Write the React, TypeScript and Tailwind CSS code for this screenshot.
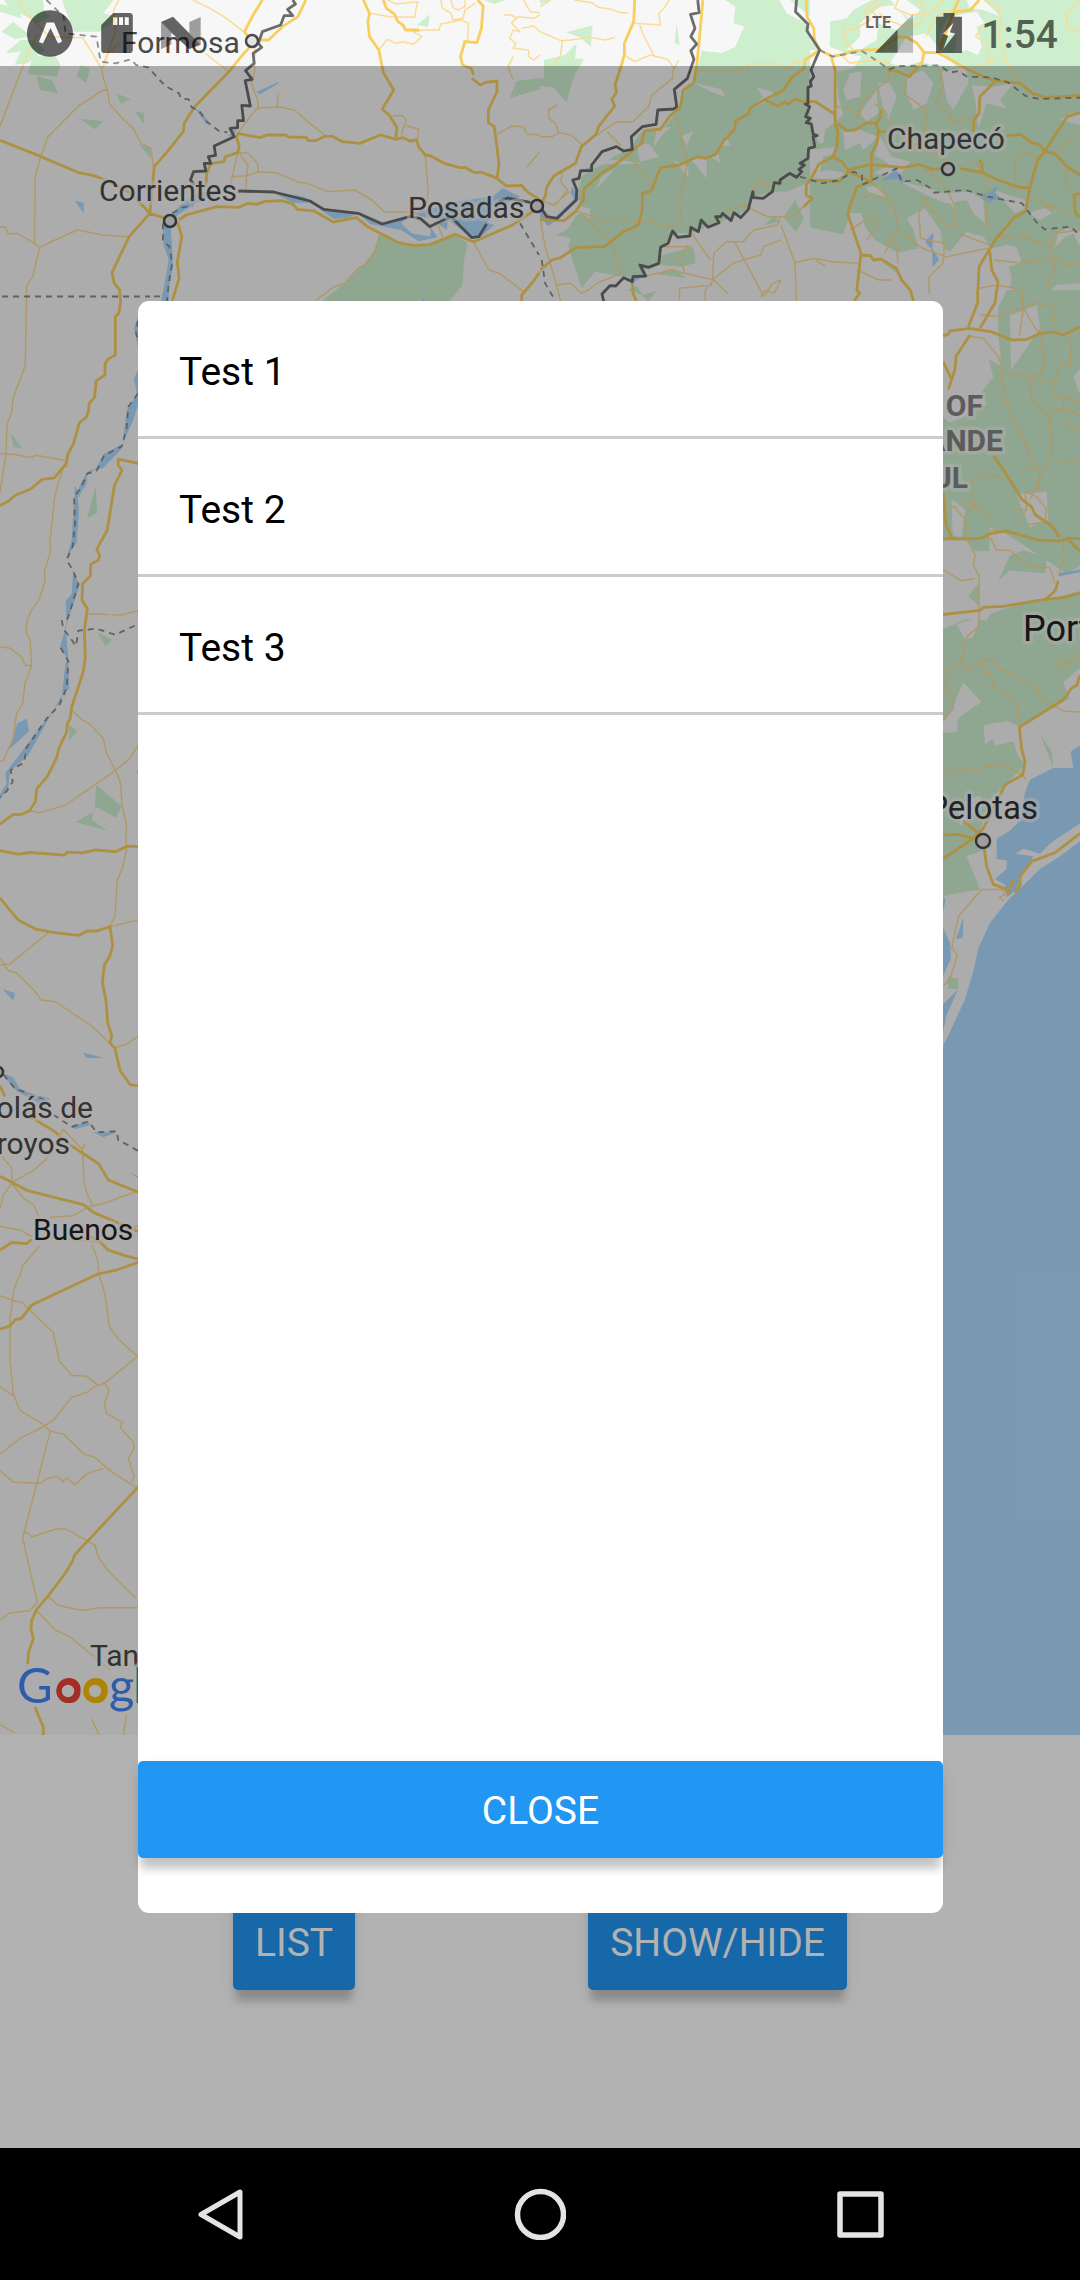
import React from "react";

type Tile = {
  id: string;
  x: number;
  y: number;
  width: number;
  height: number;
  box: string;
  transparent?: boolean;
  parks?: string[];
  clearings?: string[];
  water?: string[];
  minor?: string;
  major?: string;
  border?: string;
  dashed?: string;
};

const northWest: Tile = {
  id: "north-west",
  x: 0,
  y: 0,
  width: 540,
  height: 301,
  box: "0 0 1568 903",
  parks: [
    "12,0 125,0 128,30 145,50 110,70 60,40 35,38",
    "180,0 330,0 300,40 345,50 290,95 215,95 190,30",
    "0,12 62,28 60,55 0,35",
    "38,65 5,95 45,118 90,108",
    "60,120 15,160 60,155 42,195 80,190 130,150 100,120",
    "95,170 160,165 175,195 165,230 80,222",
    "105,228 150,240 170,280 117,270",
    "235,195 262,205 250,248 222,228",
    "338,280 380,298 350,312",
    "390,332 418,340 417,373",
    "233,356 300,364 276,388",
    "403,432 438,445 436,473",
    "1210,75 1248,43 1243,80",
    "1405,0 1470,0 1435,12",
    "1500,243 1568,234 1568,268 1480,294",
    "1102,705 1165,730 1210,738 1255,730 1322,705 1357,728 1348,780 1342,857 1305,903 935,903 1000,850 1050,800 1085,755",
  ],
  water: [
    "745,275 808,246 812,248 755,283",
    "565,325 585,335 608,368 600,372 580,345",
    "217,602 243,608 243,640",
    "662,408 685,388 680,410",
    "492,650 530,610 580,575 640,578 570,610 515,645 495,680 500,740 502,800 490,870 490,903 468,903 480,840 490,780 475,735 473,680",
    "790,575 885,590 905,608 850,608",
    "900,605 940,625 1040,638 1015,652 970,658",
    "1040,640 1110,668 1190,645 1165,670 1195,700 1250,710 1250,680 1270,712 1215,724 1165,690 1075,672",
    "1270,670 1300,665 1298,690",
    "1190,640 1350,600 1430,590 1460,565 1510,590 1480,605 1440,625 1415,668 1435,675 1395,712 1370,715 1310,665 1230,650",
    "1226,890 1236,903 1226,903",
  ],
  minor:
    "M60,0 65,30 100,65 145,110 240,113 280,180 295,205 300,235 312,270 318,312 360,360 385,383 410,430 438,445 445,500 M110,100 75,175 40,270 0,380 M345,0 330,30 335,100 300,190 M345,130 315,160 298,205 M312,270 300,270 228,318 138,412 118,470 102,530 100,730 115,742 95,830 77,857 77,903 M0,682 15,680 25,703 50,700 100,730 M115,742 160,720 225,690 300,705 375,710 M560,0 610,25 650,50 712,98 M560,130 620,180 665,215 M740,130 740,210 730,250 748,300 750,325 M745,325 810,320 855,330 900,370 945,407 M748,325 730,345 690,400 M808,280 805,320 M695,458 720,460 748,490 750,515 800,518 870,548 888,548 950,575 1030,570 1080,600 1115,635 1210,637 M695,460 720,495 713,570 M750,515 715,527 670,530 M690,460 670,550 M1235,465 1243,570 1240,620 M1140,347 1170,347 1180,360 1165,405 M1180,377 1215,387 1213,420 M1375,726 1420,810 1450,820 1520,875 M1443,403 1485,378 1520,380 1530,402 1568,405 M1568,455 1530,500 M1075,40 1130,50 1203,52 1213,5 1150,12 1125,0 M1100,150 1125,118 1150,130 1170,125 1200,133 1225,110 1200,95 1230,90 1275,90 1280,72 1340,60 1360,70 1358,120 1345,125 M1280,0 1285,25 1310,40 1315,60 1345,55 1350,30 1380,10 M1310,0 1315,22 1330,30 1350,20 1350,0 M1463,45 1485,45 1500,55 1485,68 1510,95 1490,90 1480,115 1498,130 1490,145 1535,150 1535,170 1550,180 1568,165 M1520,0 1540,35 1568,38 M1500,50 1550,55 1568,45 M1515,85 1550,78 1568,95 M1490,240 1475,200 1490,170 M1270,670 1285,710 M1102,705 1090,750 1062,795 1045,800 1000,850 970,860 915,903",
  major:
    "M0,421 120,470 225,517 270,526 320,545 380,580 435,640 480,655 M762,0 735,45 710,95 735,130 700,170 665,215 565,320 535,370 533,393 490,450 448,500 435,640 375,710 325,818 332,850 350,873 350,903 M888,0 865,50 820,80 780,120 755,120 M1055,0 1073,40 1068,65 1073,110 1100,150 1113,217 1143,270 1110,328 1130,345 1153,383 1148,417 M690,400 755,413 775,405 830,405 837,411 890,412 895,422 915,422 945,409 965,409 995,425 1045,430 1105,405 1150,418 1170,413 1190,423 1210,420 1215,440 1235,465 1250,467 1290,490 1335,503 1350,502 1375,517 1398,517 1440,533 1470,558 1515,556 1530,575 1568,600 M690,400 687,413 695,440 690,458 655,470 650,485 612,491 600,520 598,560 M520,660 540,645 630,620 695,622 720,610 745,613 770,604 820,602 850,612 863,628 912,633 968,666 1035,653 1070,682 1155,727 1198,736 1248,734 1322,703 1375,726 1420,706 1490,674 1568,620 M515,665 528,710 515,785 520,835 500,903 M1113,0 1122,25 1145,42 1155,65 1170,75 1178,90 1217,90 M1387,0 1403,18 1398,85 1385,128 1350,125 1337,170 1343,195 1368,205 1375,225 M1370,235 1395,255 1410,247 1443,243 1443,275 1418,330 1418,368 1435,380 1443,440 1449,495 1443,535 M1568,815 1548,845 1515,885 1515,903",
  border:
    "M850,0 858,12 835,28 850,47 825,47 815,75 762,95 750,130 760,142 735,160 738,190 713,212 732,238 712,242 727,318 702,316 707,362 690,362 690,383 668,385 680,410 622,438 626,466 605,470 612,490 593,490 598,513 562,515 553,540 565,555 M690,573 795,576 900,603 940,628 1040,640 1110,672 1190,650 1220,655 1248,680 1270,668 1310,650 1370,713 1390,710 1413,672 M1450,603 1475,594 1540,607",
  dashed:
    "M135,0 185,50 190,100 205,102 280,110 292,185 335,190 380,178 395,195 430,202 480,258 520,280 525,295 548,298 555,320 580,335 600,365 635,392 660,397 M0,889 470,889 M500,640 530,622 560,618 M473,670 473,720 492,740 500,790 490,850 485,903 M1510,670 1565,765",
};

const northLand: Tile = {
  id: "north-land",
  x: 540,
  y: 0,
  width: 270,
  height: 301,
  box: "0 0 810 903",
  parks: [
    "12,180 75,165 110,130 105,175 132,178 108,215 95,250 80,306 65,290 40,262 0,258 0,235 12,235",
    "78,97 158,76 152,140 120,112",
    "410,70 419,137 404,128",
    "0,12 35,0 0,0",
    "485,30 510,0 555,0 585,20 580,70 612,80 585,140 545,158 485,152 470,215 455,250 425,290 410,335 375,380 300,400 275,440 220,470 190,492 155,510 125,530 115,575 125,620 150,625 150,655 115,640 80,690 47,705 92,715 85,740 125,865 165,815 245,830 300,830 320,805 360,790 365,745 400,700 450,700 500,680 570,655 625,628 640,590 700,575 740,575 810,545 810,0 555,0",
    "350,770 460,740 468,790 420,800 365,795",
    "350,822 400,805 440,835",
    "262,870 290,858 308,885",
    "305,885 350,873 325,903",
    "675,675 700,645 720,665",
    "730,650 765,600 792,655 768,697",
  ],
  clearings: [
    "485,0 555,0 585,20 580,70 612,80 585,140 545,158 485,152 500,135 572,112 520,85 525,50 485,30",
    "460,248 545,268 555,290 520,278",
    "425,408 460,393 440,437",
    "340,445 350,385 395,380 365,405",
    "290,435 325,430 358,470 300,485",
    "165,570 185,530 225,505 195,540",
    "150,492 305,492 260,482 215,480",
    "400,480 445,500 445,530",
    "455,480 500,470 500,535",
    "512,470 535,460 542,490",
    "535,440 555,410 572,435",
    "648,262 695,275 705,290 620,335 670,290",
    "718,0 750,0 810,50 810,75 740,40",
  ],
  water: [
    "118,512 155,500 155,512 120,520",
    "95,560 112,580 122,598 105,605 58,655 25,678 0,655 0,620 20,648 45,652 102,598 92,580",
    "248,835 305,832 285,845",
  ],
};

const northEastLand: Tile = {
  id: "north-east-land",
  x: 810,
  y: 0,
  width: 270,
  height: 301,
  box: "0 0 810 903",
  parks: [
    "60,65 110,55 130,30 185,0 810,0 810,690 770,685 745,700 735,740 765,712 790,700 810,740 810,850 740,855 685,903 600,865 605,830 595,800 635,790 620,740 590,735 545,745 520,710 470,695 420,755 400,745 390,690 345,625 290,655 310,690 325,745 265,758 195,720 165,680 155,640 120,640 100,703 10,685 0,680 0,540 80,535 110,520 60,510 30,515 40,470 75,460 85,440 0,450 0,350 25,430 40,430 45,390 100,345 85,290 80,215 130,205 155,170 110,160 60,140",
    "0,0 0,150 25,150 0,120",
    "215,785 260,805 270,825",
    "0,550 12,610 0,620",
  ],
  clearings: [
    "150,70 210,20 260,15 290,60 260,90 205,70 200,120 150,150 110,150 150,110",
    "240,0 290,0 330,30 300,60",
    "290,110 350,100 400,160 440,200 370,195 330,185 280,200 240,190",
    "415,50 500,35 525,70 500,80 515,140 503,165 470,150 435,160 440,100 385,115 400,80",
    "470,0 520,0 570,48 520,30 480,25",
    "120,220 155,215 150,290 110,300 100,270",
    "150,340 200,270 205,340 170,365",
    "205,250 240,250 260,290 235,360 220,330",
    "290,230 340,210 370,250 350,310 310,330 290,280",
    "395,215 470,200 475,250 430,330 410,300",
    "485,255 550,260 610,250 570,300 590,325 530,310 505,385 495,300",
    "100,395 150,390 205,410 160,450 150,430 105,450",
    "210,410 245,470 300,485 265,530 190,520 240,495 195,465",
    "260,540 340,560 400,580 480,575 520,600 525,670 490,640 470,600 410,610 360,590 320,570",
    "550,570 645,600 645,625 615,640",
    "410,595 430,582 440,640",
    "750,360 780,340 810,335 810,375",
    "655,640 700,625 735,635 690,660",
    "165,560 210,560 225,590 180,580",
  ],
  water: [
    "217,540 255,508 278,530 280,555 262,538",
    "345,725 371,697 367,745 388,778 368,802 366,750",
    "508,582 535,578 562,558 556,585 595,605 560,598 532,610",
  ],
};

const northEastRoads: Tile = {
  id: "north-east-roads",
  x: 540,
  y: 0,
  width: 540,
  height: 301,
  box: "0 0 1568 903",
  transparent: true,
  minor:
    "M0,20 30,0 M100,0 150,8 170,22 205,28 235,38 255,38 M275,70 350,75 345,40 360,25 375,0 M290,75 300,105 330,165 M245,165 275,185 320,165 370,178 392,208 M0,95 60,122 90,120 145,112 190,120 218,112 M65,122 60,165 35,200 M403,180 385,215 385,235 325,285 315,320 270,365 M50,315 25,330 25,355 45,370 55,398 M0,410 35,410 55,398 90,405 120,432 M270,365 220,367 165,405 M195,395 235,437 M385,340 403,365 415,440 430,480 405,600 412,690 M65,520 60,545 80,570 45,615 M0,600 40,615 85,575 M110,635 190,662 270,665 285,670 320,660 360,682 400,675 M120,640 170,690 212,730 220,780 235,820 M455,212 545,215 570,205 600,212 605,192 680,190 710,205 765,180 M0,655 15,740 40,825 60,903 M45,855 90,850 120,880 140,870 165,850 230,822 M260,470 300,520 325,560 M360,740 440,740 M440,700 495,780 M430,735 405,770 420,815 M505,840 380,810 300,830 M405,903 405,865 500,855 M505,840 545,880 M540,725 505,760 500,845 480,870 480,903 M565,725 650,890 M540,725 590,725 620,690 690,675 700,645 M500,840 560,790 640,765 650,740 700,720 M700,675 740,788 745,903 M640,890 655,870 680,880 700,840 675,850 650,890 M740,788 795,775 850,785 920,790 M900,155 880,170 900,190 970,180 1015,190 1010,240 930,310 930,355 M860,320 900,325 925,355 M1085,200 1065,240 1055,280 1090,305 1125,335 1110,420 M1160,200 1170,260 1150,310 1195,345 1190,370 1270,350 M970,310 1000,330 1010,350 M1055,400 1070,430 1140,460 1175,475 1175,500 M1010,360 1050,380 1090,440 1150,465 M1120,510 1160,540 1180,570 M980,0 940,30 960,60 910,90 880,80 890,130 910,150 M1040,0 1030,25 1075,45 1135,40 1170,0 M980,50 960,30 1000,10 M1290,0 1330,20 1340,60 1330,100 1350,180 1395,240 M1290,70 1265,110 1300,130 1300,190 M1100,0 1120,30 1105,70 1060,80 M1060,80 1010,60 985,40 M1200,30 1150,50 1120,110 M1568,0 1530,40 1530,80 1568,100 M1325,180 1260,205 M1568,405 1530,425 1505,460 M1380,580 1380,470 1410,460 1450,470 M1285,520 1260,480 M1530,500 1525,550 1568,590 M1290,520 1300,560 1295,690 M1440,590 1490,640 1470,610 1540,640 M1185,575 1205,620 1205,680 1170,670 1110,590 M1105,715 1100,640 1125,590 M1105,715 1175,730 1170,790 1130,830 1130,880 1160,903 M1055,700 1110,745 1180,770 1300,745 M1215,700 1305,735 M1325,715 1390,705 1480,740 1495,810 1475,840 1475,903 M1480,740 1500,700 1568,690 M1490,770 1530,795 1568,790 M1320,780 1400,790 1480,775 M960,545 1000,580 1030,625 1040,690 1000,760 M930,600 960,580 1010,600 M920,810 985,840 1020,840 M800,780 830,800 M900,690 960,650 985,665 950,720 M1010,720 1035,740 1040,790 M1275,865 1330,855 1400,870 M620,590 625,550 645,540 655,560 700,555 M540,625 600,620 660,650 730,650 765,620",
  major:
    "M275,0 272,65 245,130 245,165 232,210 218,255 222,278 208,297 217,318 170,380 163,403 120,440 103,490 40,528 20,560 15,590 5,605 M473,0 457,180 447,247 415,272 408,322 380,345 350,387 303,393 295,430 215,497 180,518 128,567 125,600 103,635 70,662 0,658 M812,150 770,180 767,205 733,230 705,272 650,300 610,325 605,343 568,362 565,388 535,420 510,463 480,475 455,470 405,495 350,503 323,573 297,580 297,630 285,675 240,697 188,740 105,742 60,773 35,780 0,810 M655,300 690,318 712,305 720,314 738,297 765,305 800,305 855,342 M773,0 775,50 795,85 797,120 812,150 850,170 920,152 985,148 1040,110 1065,112 1095,130 1115,157 1155,158 1190,178 1240,208 1270,222 1315,240 1395,250 1430,280 1465,292 1568,287 M845,170 857,210 857,370 865,395 862,440 850,472 810,492 785,540 773,555 773,585 790,595 765,622 M865,370 890,392 915,390 950,368 975,370 983,390 978,430 962,460 962,545 895,515 870,545 825,542 790,540 M990,330 988,352 975,372 M983,395 1005,395 M850,472 875,483 895,510 960,493 1055,503 1100,493 1140,508 1165,505 M1220,505 1285,518 1330,540 1395,563 1422,563 1445,480 1465,455 1530,350 1568,338 M1320,245 1277,290 1275,340 1260,360 1258,395 M1355,407 1395,403 1430,430 1450,433 1465,455 1495,460 1530,500 1568,525 M962,545 920,560 893,640 932,760 920,870 928,880 912,903 M932,765 960,767 968,780 990,777 1035,805 1050,840 1075,870 1085,903 M1422,563 1410,635 1380,650 1325,715 1305,748 1275,800 1270,903 M1305,748 1312,810 1330,845 1325,890 1310,903 M1285,518 1283,490 1275,480 M1115,157 1110,185 1073,230 1040,215 1010,210 M1275,0 1250,30 1200,36 1215,0 M1200,36 1160,150 M268,845 270,880 280,903 M1568,580 1550,585 1555,640 1568,650",
  border:
    "M458,0 462,38 437,43 450,85 438,110 455,132 438,152 447,178 428,235 390,268 397,320 388,327 342,330 337,373 297,380 265,410 268,448 243,453 222,440 180,455 150,495 150,512 118,512 113,535 95,540 107,570 105,600 50,655 20,650 0,620 M745,0 742,35 778,72 775,92 812,150 787,210 795,230 785,245 788,258 778,262 778,310 770,312 783,320 771,350 785,355 773,368 788,372 793,403 805,407 793,410 798,440 780,445 778,475 755,490 768,495 752,508 760,515 745,532 725,520 697,540 697,550 680,548 675,575 648,595 620,593 618,575 605,628 583,653 563,638 555,662 530,640 525,650 510,650 520,668 488,682 468,660 460,695 438,682 435,708 400,712 385,693 372,730 350,742 345,790 315,802 290,795 307,828 270,830 268,845 243,833 220,858 203,857 180,882 185,903",
  dashed:
    "M812,150 850,170 935,153 1015,208 1040,198 1160,196 1190,218 1215,213 1240,230 1310,232 1360,248 1410,288 1450,297 1568,293 M755,530 820,550 870,540 910,515 935,525 935,555 1035,505 1050,545 1095,540 1135,565 1145,578 1235,570 1300,590 1400,610 1440,665 1465,688 1540,680 1568,705 M5,780 15,850 45,903",
};

const west: Tile = {
  id: "west",
  x: 0,
  y: 290,
  width: 150,
  height: 600,
  box: "0 0 450 1568",
  parks: [
    "33,375 40,410 67,413",
    "287,514 292,583 261,596",
    "292,895 337,914 317,931",
    "207,1136 231,1152 208,1180",
    "288,1293 365,1349 347,1379 285,1350",
    "227,1390 279,1364 275,1384 323,1413",
    "404,1260 450,1235 450,1285",
  ],
  water: [
    "414,70 402,100 414,150 450,150 450,60",
    "450,150 414,210 401,232 411,270 380,315 368,400 400,340 414,300 450,230",
    "366,403 312,428 285,472 310,465 365,415",
    "293,465 261,475 232,525 225,510 215,655 198,702 230,660 237,580 233,545 260,505 262,482",
    "219,738 239,770 203,865 197,885 205,960 207,1043 185,1060 85,1215 30,1258 25,1300 0,1332 0,1318 20,1290 16,1262 75,1195 185,1070 193,1000 200,960 180,935 200,870 197,812 215,795",
    "52,1133 80,1120 87,1153 28,1200",
  ],
  minor:
    "M80,0 76,197 40,280 35,320 21,350 18,428 0,528 M0,427 45,430 90,438 108,432 200,446 M203,460 190,465 180,490 165,535 150,655 151,685 133,735 135,762 118,808 92,840 79,872 79,893 90,915 95,982 75,1027 67,1083 50,1105 40,1170 10,1230 0,1231 M0,932 30,936 63,958 77,981 95,981 M262,846 325,848 M335,848 360,850 450,830 M215,1098 245,1122 270,1135 310,1173 320,1210 346,1256 360,1282 367,1350 380,1398 377,1430 380,1460 368,1510 348,1550 348,1568 M450,1150 414,1190 388,1225 346,1256 290,1290 195,1347 117,1366 90,1361",
  major:
    "M358,0 362,30 357,60 346,70 346,170 325,180 315,193 315,222 288,238 284,280 268,296 265,320 258,333 238,347 220,403 203,430 200,452 163,491 127,495 92,520 45,537 25,552 0,563 M450,460 355,442 354,457 366,471 343,512 322,627 290,678 299,693 295,706 272,717 271,747 248,768 246,810 262,833 253,890 256,962 249,1000 215,1090 210,1122 202,1133 200,1155 177,1197 170,1222 143,1270 110,1304 106,1338 88,1361 66,1370 38,1371 0,1396 M0,1465 55,1474 90,1470 193,1477 203,1469 247,1471 287,1463 347,1468 380,1454 450,1454",
  dashed:
    "M6,17 450,17 M414,80 407,105 414,135 M414,270 385,305 380,360 366,408 312,433 290,472 262,480 240,520 222,540 225,610 218,670 200,705 220,735 235,768 210,840 203,858 185,862 190,885 228,930 235,890 290,885 345,901 405,877 M182,935 205,970 200,1040 178,1085 140,1120 80,1195 72,1235 32,1255 38,1285 20,1310 0,1325",
};

const southWest: Tile = {
  id: "south-west",
  x: 0,
  y: 880,
  width: 150,
  height: 855,
  box: "0 0 450 1559",
  water: [
    "8,199 45,206 40,220",
    "248,315 312,324 262,325",
    "0,350 40,360 60,382 110,393 150,398 130,412 95,400 50,385",
    "210,450 265,440 270,447 225,454",
    "280,460 350,460 310,469",
    "385,532 450,550 450,558",
  ],
  minor:
    "M352,0 345,65 330,85 414,73 M145,96 30,153 0,155 M0,142 25,165 50,170 105,203 123,219 167,222 235,250 275,266 330,298 M347,305 378,300 450,270 M0,600 10,575 35,553 35,525 0,500 M35,553 70,580 100,592 120,618 M40,550 100,530 140,508 190,455 245,490 M255,480 248,490 252,552 262,572 278,595 M150,615 220,612 270,595 310,590 414,567 M0,632 60,638 95,650 M140,650 290,660 414,630 M118,668 68,703 62,718 42,745 30,800 30,875 40,937 60,967 130,993 150,1005 190,1010 250,1046 285,1053 330,1077 414,1110 M0,924 40,940 M0,1047 60,1018 130,997 160,985 215,943 265,933 280,925 315,917 414,868 M0,758 40,767 65,770 160,825 178,877 215,903 260,905 295,922 M275,665 292,690 297,720 315,755 328,815 355,837 414,870 M315,917 327,930 313,955 320,973 348,982 368,990 360,998 400,1025 402,1037 385,1055 403,1088 392,1098 M0,1077 40,1098 123,1100 138,1092 170,1087 190,1097 200,1090 225,1103 262,1082 310,1073 M150,1007 68,1200 80,1232 112,1317 90,1332 M70,1192 82,1190 95,1198 170,1183 200,1184 285,1213 295,1235 325,1260 408,1310 M90,1332 25,1337 0,1350 M145,1307 175,1323 247,1332 300,1327 414,1327 M110,1332 165,1367 210,1380 330,1440 M0,1540 45,1555 M275,1530 298,1559 M380,1520 370,1559",
  major:
    "M0,33 55,73 105,89 155,95 235,101 262,93 290,93 330,85 338,120 330,138 313,155 307,187 318,220 323,260 335,283 330,297 345,307 360,347 390,373 450,378 M0,540 85,567 250,592 280,606 450,650 M0,675 35,661 80,663 95,655 M270,650 305,663 325,675 375,685 450,697 M0,819 30,813 45,802 65,799 95,775 295,718 345,712 450,690 M450,1085 414,1107 225,1230 215,1245 195,1265 145,1305 110,1330 95,1350 93,1365 100,1383 85,1410 83,1430 M105,1508 130,1545 130,1559 M0,375 15,395 M85,430 160,457 215,485 295,517 325,547 450,578",
  dashed: "M10,355 45,380 80,388 150,405 M160,428 215,450 265,440 290,460 350,458 355,475 380,482 414,494",
};

const east: Tile = {
  id: "east",
  x: 930,
  y: 290,
  width: 150,
  height: 800,
  box: "0 0 450 1568",
  parks: [
    "205,35 230,0 450,0 450,540 410,556 280,500 235,480 178,465 178,512 135,512 110,492 39,488 39,235 100,225 170,225 155,200 190,170 175,135 215,150 205,90",
    "115,600 150,572 145,618",
    "205,570 240,520 280,510 350,525 345,555 240,550",
    "39,665 110,645 170,648 180,635 290,610 345,608 450,590 450,740 400,770 420,800 265,855 230,845 160,853 165,890 190,880 195,893 250,885 265,915 285,930 240,960 180,1000 150,1060 150,1085 190,1090 110,1110 150,1175 60,1185 39,1190 39,868 80,867 85,840 125,820 155,808 125,787 100,770 60,830 39,845",
    "330,870 365,905 370,937",
    "55,1345 85,1350 84,1370 53,1370",
  ],
  clearings: [
    "240,50 320,30 330,75 243,157",
    "430,170 450,155 450,205",
    "258,400 350,395 355,450 320,460 300,465",
    "65,410 105,430 95,485 68,480",
    "80,655 105,685 130,680 150,640",
    "85,1010 150,990 160,1010 90,1050",
    "0,165 60,180 130,240 60,260 0,230",
    "39,0 230,0 205,30 140,20 60,75 39,85",
  ],
  water: [
    "450,893 422,905 430,937 370,937 345,945 300,960 285,985 270,1040 240,1060 200,1075 200,1115 230,1118 230,1135 195,1155 225,1165 230,1190 260,1175 270,1150 310,1110 255,1105 280,1095 330,1105 360,1085 450,1045",
    "450,1080 390,1110 330,1135 260,1180 235,1195 180,1240 145,1290 130,1335 105,1390 70,1440 39,1482 0,1540 0,1568 450,1568",
    "39,1190 47,1195 39,1220",
    "39,1250 60,1280 63,1310 39,1345",
    "100,1230 98,1270 78,1272",
    "39,1400 85,1370 50,1420 39,1455",
    "385,555 450,548 450,553 388,561",
  ],
  minor:
    "M120,90 160,95 205,130 217,155 210,165 230,220 250,255 275,285 310,340 330,360 325,380 300,410 M217,160 300,170 335,165 345,130 330,90 280,35 200,52 150,48 M280,35 268,90 M275,0 280,35 320,25 380,35 365,60 385,75 M400,88 425,100 420,145 390,150 370,185 305,173 M370,185 372,205 450,220 M340,240 390,235 430,237 450,230 M400,210 400,235 450,245 M300,175 305,215 360,250 365,320 320,380 325,395 M450,280 400,260 M385,337 430,335 450,345 M280,353 320,350 M150,362 220,365 M150,362 120,380 135,420 110,440 M95,415 150,425 180,450 M240,430 290,430 285,395 320,405 350,430 345,455 295,460 M290,430 270,450 M39,425 75,425 110,455 110,485 135,520 130,540 147,560 147,650 145,660 110,680 95,730 110,745 150,730 165,750 180,750 190,775 220,790 255,800 270,850 M180,472 240,470 M180,485 200,510 240,510 290,540 360,545 375,575 M400,495 402,530 385,560 M39,548 95,570 135,565 M95,730 60,740 47,760 50,790 70,800 70,820 39,845 M150,725 195,725 210,745 240,750 320,780 330,800 400,825 450,827 M380,745 390,725 420,730 M375,740 410,740 450,710 M39,950 60,940 120,943 160,935 220,930 265,945 290,960 M220,1175 155,1175 85,1228 65,1290 82,1303 60,1350 39,1365 M215,1172 225,1185 208,1190 222,1198",
  major:
    "M39,90 55,87 60,80 120,75 185,82 245,98 290,97 330,85 370,82 400,88 450,72 M143,0 143,25 115,72 M200,0 195,25 150,75 M120,88 78,130 75,155 55,195 M39,140 65,175 M190,325 225,357 275,410 305,425 315,440 370,465 388,485 M39,488 150,487 180,478 225,472 325,490 385,492 415,487 450,487 M415,490 450,512 M39,395 48,460 65,485 M39,636 150,628 160,622 220,620 340,607 400,603 450,594 M385,570 375,590 345,607 M450,755 440,775 425,780 400,803 268,857 275,900 285,925 278,950 225,970 160,1055 130,1075 M39,1068 85,1067 130,1075 M39,1115 130,1075 M100,1040 145,1065 M163,1095 170,1130 190,1165 225,1173 235,1182 250,1155 M255,1182 270,1168 270,1150 305,1120 375,1103 450,1065",
};

const tiles = [northWest, northLand, northEastLand, northEastRoads, west, southWest, east];

function MapTile({ tile }: { tile: Tile }) {
  return (
    <svg
      x={tile.x}
      y={tile.y}
      width={tile.width}
      height={tile.height}
      viewBox={tile.box}
      preserveAspectRatio="none"
      overflow="hidden"
    >
      {!tile.transparent && <rect width="1568" height="1568" fill="#f7f7f7" />}
      {tile.parks?.map((p) => (
        <polygon key={p} points={p} fill="#cdefce" />
      ))}
      {tile.clearings?.map((p) => (
        <polygon key={p} points={p} fill="#f7f7f7" />
      ))}
      {tile.water?.map((p) => (
        <polygon key={p} points={p} fill="#aedaff" />
      ))}
      <g fill="none" strokeLinejoin="round">
        <path d={tile.minor} stroke="#fbdc94" strokeWidth="1.5" vectorEffect="non-scaling-stroke" />
        <path d={tile.major} stroke="#f8cf5e" strokeWidth="2.8" vectorEffect="non-scaling-stroke" />
        <path
          d={tile.dashed}
          stroke="#8c8c8c"
          strokeWidth="1.8"
          strokeDasharray="6 5"
          vectorEffect="non-scaling-stroke"
        />
        <path d={tile.border} stroke="#6c6c6c" strokeWidth="2.8" vectorEffect="non-scaling-stroke" />
      </g>
    </svg>
  );
}

type Label = { text: string; x: number; y: number; size: number; fill: string; end?: boolean; bold?: boolean };

const labels: Label[] = [
  { text: "Formosa", x: 121, y: 53, size: 30, fill: "#4a4a4a" },
  { text: "Corrientes", x: 99, y: 201, size: 30, fill: "#4a4a4a" },
  { text: "Posadas", x: 408, y: 218, size: 30, fill: "#4a4a4a" },
  { text: "Chapecó", x: 887, y: 149, size: 30, fill: "#4a4a4a" },
  { text: "olás de", x: 93, y: 1118, size: 30, fill: "#4a4a4a", end: true },
  { text: "royos", x: 70, y: 1154, size: 30, fill: "#4a4a4a", end: true },
  { text: "Buenos", x: 33, y: 1240, size: 30, fill: "#222222" },
  { text: "Tan", x: 90, y: 1666, size: 30, fill: "#4a4a4a" },
  { text: "Pelotas", x: 1038, y: 819, size: 33, fill: "#333333", end: true },
  { text: "Porto", x: 1023, y: 641, size: 36, fill: "#222222" },
  { text: "OF", x: 983, y: 416, size: 30, fill: "#858585", end: true, bold: true },
  { text: "GRANDE", x: 1003, y: 451, size: 30, fill: "#858585", end: true, bold: true },
  { text: "SUL", x: 968, y: 488, size: 30, fill: "#858585", end: true, bold: true },
];

const towns = [
  [252, 41, 6],
  [170, 221, 6],
  [537, 206, 6],
  [948, 169, 6],
  [983, 841, 7],
  [-2, 1072, 5],
];

function MapView() {
  return (
    <svg
      className="absolute inset-0 h-full w-full"
      viewBox="0 0 1080 1735"
      preserveAspectRatio="xMidYMin slice"
      fontFamily="Roboto, sans-serif"
      role="img"
      aria-label="Map"
    >
      <rect width="1080" height="1735" fill="#f7f7f7" />
      <rect x="930" y="1080" width="150" height="655" fill="#aedaff" />
      {tiles.map((tile) => (
        <MapTile key={tile.id} tile={tile} />
      ))}
      {towns.map(([x, y, r]) => (
        <circle key={x} cx={x} cy={y} r={r} fill="#e4e4e4" stroke="#4a4a4a" strokeWidth="2.5" />
      ))}
      <g strokeLinejoin="round" paintOrder="stroke" stroke="#f7f7f7" strokeOpacity="0.6" strokeWidth="7">
        {labels.map((l) => (
          <text
            key={l.text}
            x={l.x}
            y={l.y}
            fontSize={l.size}
            fill={l.fill}
            fontWeight={l.bold ? 700 : 400}
            textAnchor={l.end ? "end" : "start"}
          >
            {l.text}
          </text>
        ))}
        <text y="1703" fontSize="49" fontFamily="Lato, sans-serif" fontWeight="400">
          <tspan x="17" fill="#4285f4">G</tspan>
          <tspan x="55" fill="#ea4335">o</tspan>
          <tspan x="82" fill="#fbbc05">o</tspan>
          <tspan x="109" fill="#4285f4">g</tspan>
          <tspan x="133" fill="#34a853">l</tspan>
        </text>
      </g>
      <g fill="none" strokeWidth="5.500">
        <circle cx="68" cy="1691" r="9" stroke="#ea4335" />
        <circle cx="95" cy="1691" r="9" stroke="#fbbc05" />
      </g>
    </svg>
  );
}

function StatusBar() {
  return (
    <header className="absolute inset-x-0 top-0 z-20 flex h-[66px] justify-between pl-[27px] pr-[22px] text-black/60">
      <div className="flex gap-7">
        <svg className="mt-[10px] h-[47px] w-[46px]" viewBox="0 0 139 141" fill="currentColor" aria-hidden="true">
          <path
            fillRule="evenodd"
            d="M69.500 0A69.500 70.500 0 1 1 69.400 0ZM59 37 36 96 48 101 71 54 94 101 106 95 82 37Z"
          />
        </svg>
        <svg className="mt-[13px] h-10 w-8" viewBox="0 0 94 119" fill="currentColor" aria-hidden="true">
          <path
            fillRule="evenodd"
            d="M36 0H84Q94 0 94 10V109Q94 119 84 119H10Q0 119 0 109V36ZM35 13V36H48V13ZM53 13V36H65V13ZM70 13V36H82V13Z"
          />
        </svg>
        <svg className="mt-4 h-[34px] w-10" viewBox="0 0 120 98" fill="currentColor" aria-hidden="true">
          <path d="M0 16 36 0 119 84 85 97 31 48Z" />
          <path opacity="0.6" d="M0 16 31 48V83L0 98ZM85 16 119 1V84L85 50Z" />
        </svg>
      </div>
      <div className="flex">
        <div className="relative mr-[23px] w-12">
          <span className="absolute left-0 top-[15px] text-base font-bold leading-4">LTE</span>
          <svg className="absolute right-0 top-[14px] h-[39px] w-[38px]" viewBox="0 0 114 115" fill="currentColor" aria-hidden="true">
            <path d="M0 115 68 45V115Z" />
            <path opacity="0.4" d="M68 45 114 0V115H68Z" />
          </svg>
        </div>
        <svg className="mr-[19px] mt-[13px] h-10 w-[26px]" viewBox="0 0 77 119" fill="currentColor" aria-hidden="true">
          <path fillRule="evenodd" d="M22 0H55V11H77V119H0V11H22ZM52 29 21 62 36 68 22 106 57 62 41 57Z" />
        </svg>
        <time className="mt-3 text-[39px] font-medium leading-[46px]">1:54</time>
      </div>
    </header>
  );
}

const items = ["Test 1", "Test 2", "Test 3"];

const raised =
  "h-[97px] rounded-[5px] bg-[#2196f3] pt-[3px] text-[39px] leading-[46px] text-white shadow-[0_14px_8px_-3px_rgba(0,0,0,0.19),0_6px_16px_rgba(0,0,0,0.08)]";

export default function App() {
  return (
    <div className="relative flex min-h-screen flex-col bg-white font-[Roboto,sans-serif]">
      <StatusBar />
      <main className="flex flex-1 flex-col">
        <div className="relative flex-1 overflow-hidden">
          <MapView />
        </div>
        <div className="flex justify-evenly py-[158px]">
          <button className={`${raised} px-[22px]`}>LIST</button>
          <button className={`${raised} px-[22px]`}>SHOW/HIDE</button>
        </div>
      </main>

      <div className="absolute inset-x-0 bottom-[132px] top-[66px] z-10 flex bg-black/30 py-[235px] pl-[138px] pr-[137px]">
        <div
          role="dialog"
          aria-modal="true"
          aria-label="Tests"
          className="flex flex-1 flex-col rounded-[11px] bg-white pb-[55px]"
        >
          <ul className="flex-1">
            {items.map((item) => (
              <li
                key={item}
                className="border-b-[3px] border-[#cccccc] px-[41px] pb-[41px] pt-12 text-[39px] leading-[46px] text-black"
              >
                {item}
              </li>
            ))}
          </ul>
          <button className={raised}>CLOSE</button>
        </div>
      </div>

      <nav className="grid h-[132px] grid-cols-3 bg-black px-[60px] text-[#e4e4e4]" aria-label="System navigation">
        <button className="flex items-center justify-center" aria-label="Back">
          <svg className="h-[52px] w-[52px]" viewBox="0 0 52 52" fill="none" stroke="currentColor" strokeWidth="5" strokeLinejoin="round">
            <path d="M46 4V49L7 26.500Z" />
          </svg>
        </button>
        <button className="flex items-center justify-center" aria-label="Home">
          <svg className="h-[52px] w-[52px]" viewBox="0 0 52 52" fill="none" stroke="currentColor" strokeWidth="5.500">
            <circle cx="26.500" cy="26.500" r="23" />
          </svg>
        </button>
        <button className="flex items-center justify-center" aria-label="Recent apps">
          <svg className="h-[52px] w-[52px]" viewBox="0 0 52 52" fill="none" stroke="currentColor" strokeWidth="5.500" strokeLinejoin="round">
            <rect x="6" y="6" width="41" height="41" />
          </svg>
        </button>
      </nav>
    </div>
  );
}
